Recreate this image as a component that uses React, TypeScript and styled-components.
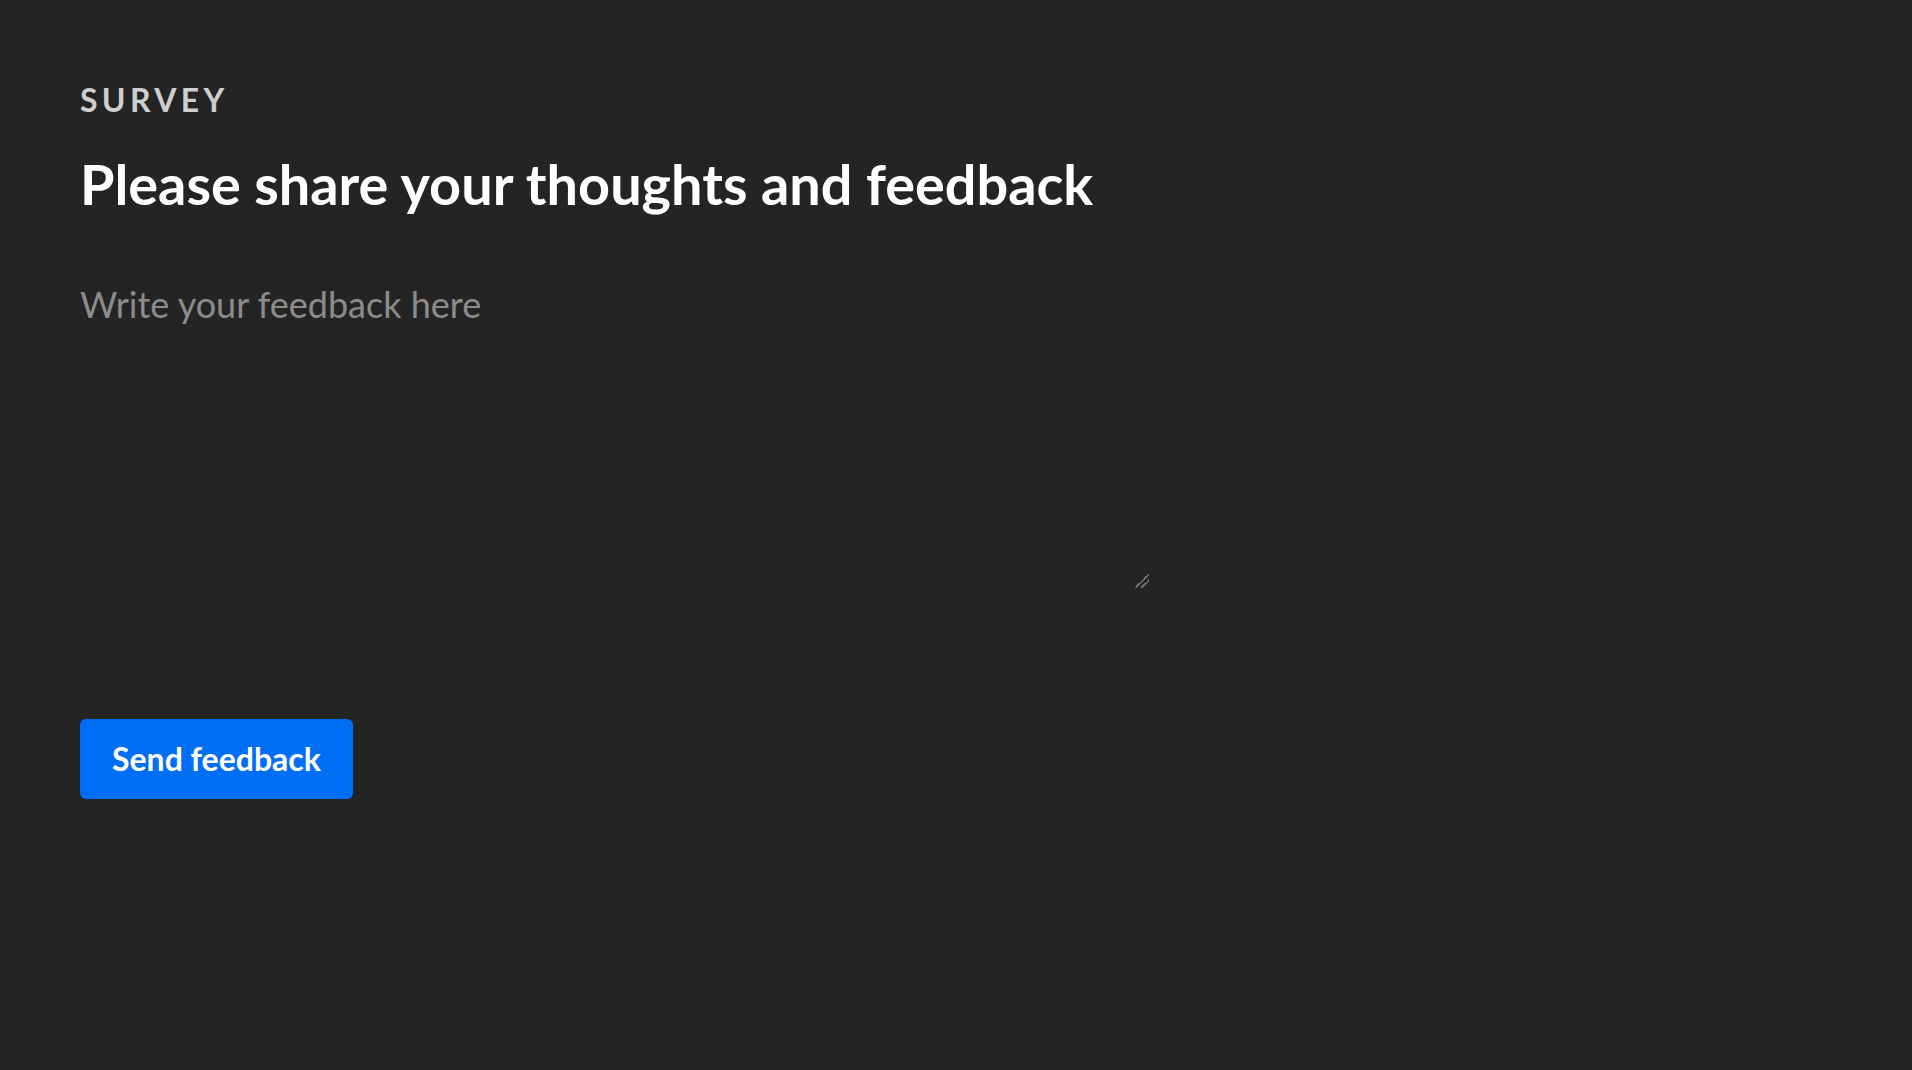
import React from 'react';
import styled, { createGlobalStyle } from 'styled-components';

const GlobalStyle = createGlobalStyle`
  html, body {
    margin: 0;
    padding: 0;
    background: #242424;
  }
  body {
    font-family: Lato, 'Noto Sans', sans-serif;
    color: #ffffff;
  }
`;

const Page = styled.main`
  min-height: 100vh;
  box-sizing: border-box;
  padding: 80px;
  display: flex;
  flex-direction: column;
  align-items: flex-start;
  background: #242424;
`;

const Eyebrow = styled.div`
  font-size: 32px;
  font-weight: 700;
  letter-spacing: 0.135em;
  text-transform: uppercase;
  color: #cfcfcf;
`;

const Title = styled.h1`
  margin: 32px 0 0;
  font-size: 55.8px;
  font-weight: 700;
  line-height: 1.2;
  color: #ffffff;
`;

const FeedbackInput = styled.textarea`
  margin-top: 65px;
  width: 1069px;
  height: 305px;
  padding: 0;
  border: none;
  outline: none;
  background: transparent;
  color: #ffffff;
  font-family: Lato, 'Noto Sans', sans-serif;
  font-size: 36px;
  line-height: 1.2;
  resize: both;

  &::placeholder {
    color: #8c8c8c;
  }

  &::-webkit-scrollbar {
    width: 20px;
    height: 20px;
  }

  /* big grip, like the native one on a 2x screen */
  &::-webkit-resizer {
    background: linear-gradient(
      135deg,
      transparent 50%,
      #6e6e6e 50%,
      #6e6e6e 58%,
      transparent 58%,
      transparent 70%,
      #6e6e6e 70%,
      #6e6e6e 78%,
      transparent 78%
    );
  }
`;

const SendButton = styled.button`
  margin-top: 131px;
  height: 80px;
  padding: 0 32px;
  border: none;
  border-radius: 6px;
  background: #006ef5;
  color: #ffffff;
  font-family: Lato, 'Noto Sans', sans-serif;
  font-size: 32px;
  font-weight: 700;
  cursor: pointer;

  &:hover {
    opacity: 0.9;
  }
`;

const App: React.FC = () => {
  return (
    <>
      <GlobalStyle />
      <Page>
        <Eyebrow>Survey</Eyebrow>
        <Title>Please share your thoughts and feedback</Title>
        <FeedbackInput placeholder="Write your feedback here" />
        <SendButton type="button">Send feedback</SendButton>
      </Page>
    </>
  );
};

export default App;
